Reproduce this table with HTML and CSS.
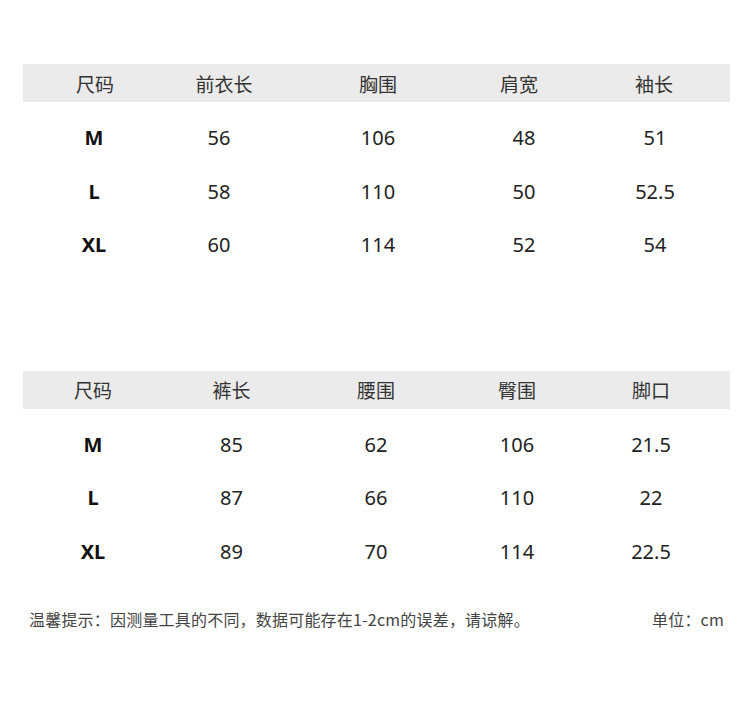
FILE: index.html
```html
<!DOCTYPE html>
<html lang="zh">
<head>
<meta charset="utf-8">
<link rel="stylesheet" href="styles.css">
</head>
<body>
<div class="page">
  <div class="table t1">
    <div class="row head"><span>尺码</span><span>前衣长</span><span>胸围</span><span>肩宽</span><span>袖长</span></div>
    <div class="row"><span class="size">M</span><span>56</span><span>106</span><span>48</span><span>51</span></div>
    <div class="row"><span class="size">L</span><span>58</span><span>110</span><span>50</span><span>52.5</span></div>
    <div class="row"><span class="size">XL</span><span>60</span><span>114</span><span>52</span><span>54</span></div>
  </div>
  <div class="table t2">
    <div class="row head"><span>尺码</span><span>裤长</span><span>腰围</span><span>臀围</span><span>脚口</span></div>
    <div class="row"><span class="size">M</span><span>85</span><span>62</span><span>106</span><span>21.5</span></div>
    <div class="row"><span class="size">L</span><span>87</span><span>66</span><span>110</span><span>22</span></div>
    <div class="row"><span class="size">XL</span><span>89</span><span>70</span><span>114</span><span>22.5</span></div>
  </div>
  <div class="note">
    <span>温馨提示：因测量工具的不同，数据可能存在1-2cm的误差，请谅解。</span>
    <span>单位：cm</span>
  </div>
</div>
</body>
</html>
```
FILE: styles.css
```css
html, body {
  margin: 0;
  padding: 0;
  background: #fff;
}
body {
  font-family: "Noto Sans", "Noto Sans CJK SC", sans-serif;
  color: #222;
  width: 750px;
  height: 713px;
  overflow: hidden;
}
.page {
  padding: 64px 20px 0 23px;
}
.table {
  width: 707px;
}
.row {
  display: grid;
  padding-left: 10px;
  height: 53.5px;
  align-items: center;
  font-size: 20px;
  text-align: center;
  white-space: nowrap;
}
.t1 .row {
  grid-template-columns: 122px 128px 190px 102px 160px;
}
.t1 .row.head {
  grid-template-columns: 124px 134px 174px 108px 162px;
}
.t2 .row {
  grid-template-columns: 120px 157px 132px 150px 118px;
}
.row.head {
  height: 38px;
  background: #ebebeb;
  font-family: "Noto Sans CJK SC", sans-serif;
  font-size: 19px;
  color: #333;
  margin-bottom: 9px;
}
.size {
  font-weight: 700;
  color: #111;
}
.t2 {
  margin-top: 99px;
}
.note {
  margin-top: 29px;
  display: flex;
  justify-content: space-between;
  padding: 0 0 0 6px;
  width: 695px;
  font-family: "Noto Sans CJK SC", sans-serif;
  font-size: 16px;
  letter-spacing: 0.2px;
  color: #444;
}
```
